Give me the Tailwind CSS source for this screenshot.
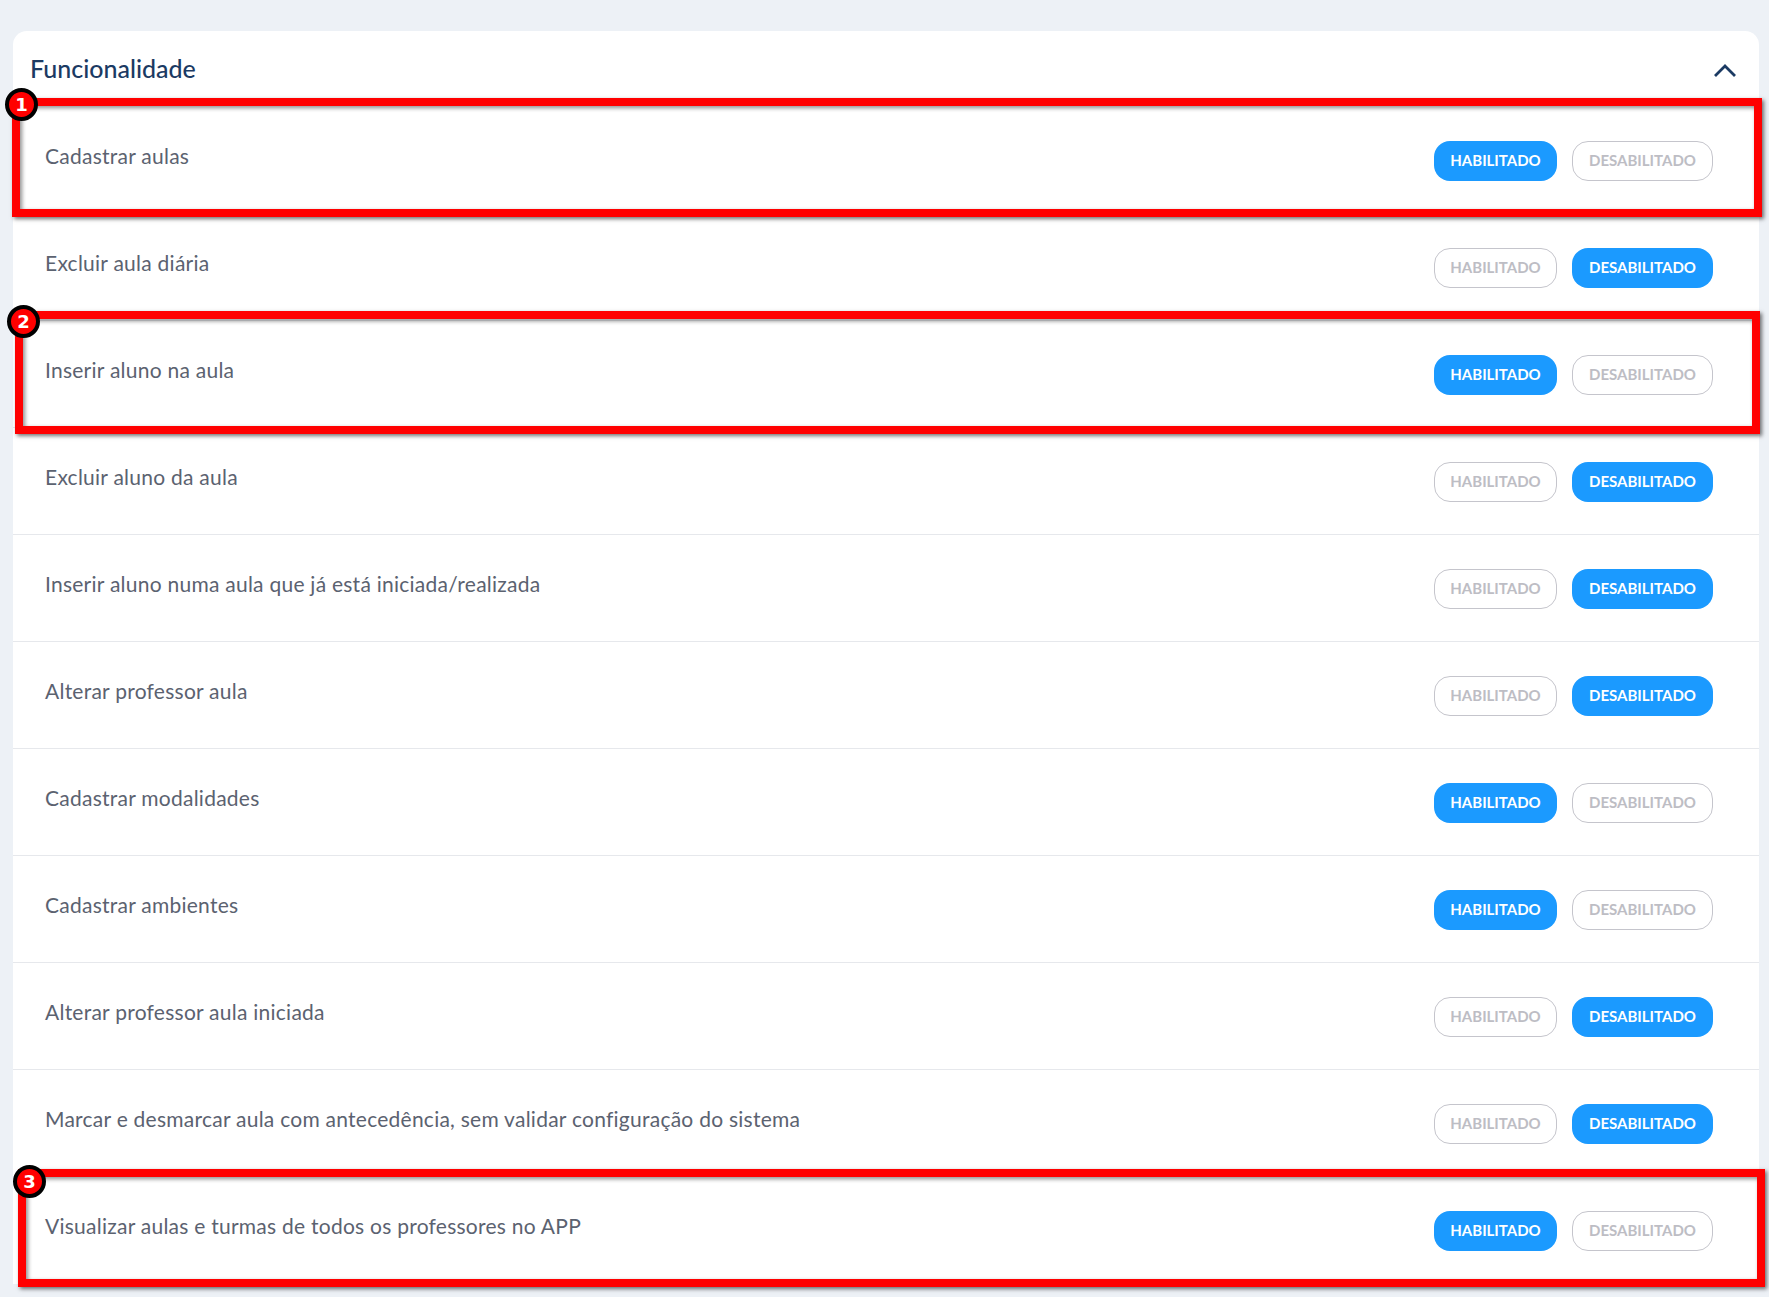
<!DOCTYPE html>
<html lang="pt-BR">
<head>
<meta charset="utf-8">
<title>Funcionalidade</title>
<script src="https://cdn.jsdelivr.net/npm/@tailwindcss/browser@4"></script>
</head>
<body class="bg-[#edf1f6] font-['Lato',sans-serif]">
<div class="relative h-[1297px] overflow-hidden pt-[31px] pl-[13px] pr-[10px]">
    <!-- card -->
    <div class="bg-white rounded-t-[14px]">
        <div class="flex items-center justify-between h-[76px] pl-[17px] pr-[22px]">
            <h2 class="text-[25px] leading-[30px] font-medium text-[#1b3a63] mb-[2px]">Funcionalidade</h2>
            <svg class="w-[24px] h-[14px] text-[#1b3a63] mt-[2px]" fill="none" stroke="currentColor" viewBox="0 0 24 14"><path stroke-width="2.8" d="M2 13L12 3l10 10"></path></svg>
        </div>

        <div class="flex justify-between items-start h-[107px] pt-[34px] pl-[32px] pr-[46px] border-b border-[#e6e8ec]">
            <span class="mt-[3px] text-[21px] leading-[24px] tracking-[0.25px] text-[#5b6270]">Cadastrar aulas</span>
            <div class="flex gap-[15px]">
                <button class="h-[40px] w-[123px] pb-[2px] rounded-[16px] bg-[#1b9aff] text-white text-[15px] font-bold">HABILITADO</button>
                <button class="h-[40px] w-[141px] pb-[2px] rounded-[16px] border border-[#c5c5cc] text-[#bdbdc4] text-[15px] font-bold">DESABILITADO</button>
            </div>
        </div>
        <div class="flex justify-between items-start h-[107px] pt-[34px] pl-[32px] pr-[46px] border-b border-[#e6e8ec]">
            <span class="mt-[3px] text-[21px] leading-[24px] tracking-[0.25px] text-[#5b6270]">Excluir aula diária</span>
            <div class="flex gap-[15px]">
                <button class="h-[40px] w-[123px] pb-[2px] rounded-[16px] border border-[#c5c5cc] text-[#bdbdc4] text-[15px] font-bold">HABILITADO</button>
                <button class="h-[40px] w-[141px] pb-[2px] rounded-[16px] bg-[#1b9aff] text-white text-[15px] font-bold">DESABILITADO</button>
            </div>
        </div>
        <div class="flex justify-between items-start h-[107px] pt-[34px] pl-[32px] pr-[46px] border-b border-[#e6e8ec]">
            <span class="mt-[3px] text-[21px] leading-[24px] tracking-[0.25px] text-[#5b6270]">Inserir aluno na aula</span>
            <div class="flex gap-[15px]">
                <button class="h-[40px] w-[123px] pb-[2px] rounded-[16px] bg-[#1b9aff] text-white text-[15px] font-bold">HABILITADO</button>
                <button class="h-[40px] w-[141px] pb-[2px] rounded-[16px] border border-[#c5c5cc] text-[#bdbdc4] text-[15px] font-bold">DESABILITADO</button>
            </div>
        </div>
        <div class="flex justify-between items-start h-[107px] pt-[34px] pl-[32px] pr-[46px] border-b border-[#e6e8ec]">
            <span class="mt-[3px] text-[21px] leading-[24px] tracking-[0.25px] text-[#5b6270]">Excluir aluno da aula</span>
            <div class="flex gap-[15px]">
                <button class="h-[40px] w-[123px] pb-[2px] rounded-[16px] border border-[#c5c5cc] text-[#bdbdc4] text-[15px] font-bold">HABILITADO</button>
                <button class="h-[40px] w-[141px] pb-[2px] rounded-[16px] bg-[#1b9aff] text-white text-[15px] font-bold">DESABILITADO</button>
            </div>
        </div>
        <div class="flex justify-between items-start h-[107px] pt-[34px] pl-[32px] pr-[46px] border-b border-[#e6e8ec]">
            <span class="mt-[3px] text-[21px] leading-[24px] tracking-[0.25px] text-[#5b6270]">Inserir aluno numa aula que já está iniciada/realizada</span>
            <div class="flex gap-[15px]">
                <button class="h-[40px] w-[123px] pb-[2px] rounded-[16px] border border-[#c5c5cc] text-[#bdbdc4] text-[15px] font-bold">HABILITADO</button>
                <button class="h-[40px] w-[141px] pb-[2px] rounded-[16px] bg-[#1b9aff] text-white text-[15px] font-bold">DESABILITADO</button>
            </div>
        </div>
        <div class="flex justify-between items-start h-[107px] pt-[34px] pl-[32px] pr-[46px] border-b border-[#e6e8ec]">
            <span class="mt-[3px] text-[21px] leading-[24px] tracking-[0.25px] text-[#5b6270]">Alterar professor aula</span>
            <div class="flex gap-[15px]">
                <button class="h-[40px] w-[123px] pb-[2px] rounded-[16px] border border-[#c5c5cc] text-[#bdbdc4] text-[15px] font-bold">HABILITADO</button>
                <button class="h-[40px] w-[141px] pb-[2px] rounded-[16px] bg-[#1b9aff] text-white text-[15px] font-bold">DESABILITADO</button>
            </div>
        </div>
        <div class="flex justify-between items-start h-[107px] pt-[34px] pl-[32px] pr-[46px] border-b border-[#e6e8ec]">
            <span class="mt-[3px] text-[21px] leading-[24px] tracking-[0.25px] text-[#5b6270]">Cadastrar modalidades</span>
            <div class="flex gap-[15px]">
                <button class="h-[40px] w-[123px] pb-[2px] rounded-[16px] bg-[#1b9aff] text-white text-[15px] font-bold">HABILITADO</button>
                <button class="h-[40px] w-[141px] pb-[2px] rounded-[16px] border border-[#c5c5cc] text-[#bdbdc4] text-[15px] font-bold">DESABILITADO</button>
            </div>
        </div>
        <div class="flex justify-between items-start h-[107px] pt-[34px] pl-[32px] pr-[46px] border-b border-[#e6e8ec]">
            <span class="mt-[3px] text-[21px] leading-[24px] tracking-[0.25px] text-[#5b6270]">Cadastrar ambientes</span>
            <div class="flex gap-[15px]">
                <button class="h-[40px] w-[123px] pb-[2px] rounded-[16px] bg-[#1b9aff] text-white text-[15px] font-bold">HABILITADO</button>
                <button class="h-[40px] w-[141px] pb-[2px] rounded-[16px] border border-[#c5c5cc] text-[#bdbdc4] text-[15px] font-bold">DESABILITADO</button>
            </div>
        </div>
        <div class="flex justify-between items-start h-[107px] pt-[34px] pl-[32px] pr-[46px] border-b border-[#e6e8ec]">
            <span class="mt-[3px] text-[21px] leading-[24px] tracking-[0.25px] text-[#5b6270]">Alterar professor aula iniciada</span>
            <div class="flex gap-[15px]">
                <button class="h-[40px] w-[123px] pb-[2px] rounded-[16px] border border-[#c5c5cc] text-[#bdbdc4] text-[15px] font-bold">HABILITADO</button>
                <button class="h-[40px] w-[141px] pb-[2px] rounded-[16px] bg-[#1b9aff] text-white text-[15px] font-bold">DESABILITADO</button>
            </div>
        </div>
        <div class="flex justify-between items-start h-[107px] pt-[34px] pl-[32px] pr-[46px] border-b border-[#e6e8ec]">
            <span class="mt-[3px] text-[21px] leading-[24px] tracking-[0.25px] text-[#5b6270]">Marcar e desmarcar aula com antecedência, sem validar configuração do sistema</span>
            <div class="flex gap-[15px]">
                <button class="h-[40px] w-[123px] pb-[2px] rounded-[16px] border border-[#c5c5cc] text-[#bdbdc4] text-[15px] font-bold">HABILITADO</button>
                <button class="h-[40px] w-[141px] pb-[2px] rounded-[16px] bg-[#1b9aff] text-white text-[15px] font-bold">DESABILITADO</button>
            </div>
        </div>
        <div class="flex justify-between items-start h-[107px] pt-[34px] pl-[32px] pr-[46px]">
            <span class="mt-[3px] text-[21px] leading-[24px] tracking-[0.25px] text-[#5b6270]">Visualizar aulas e turmas de todos os professores no APP</span>
            <div class="flex gap-[15px]">
                <button class="h-[40px] w-[123px] pb-[2px] rounded-[16px] bg-[#1b9aff] text-white text-[15px] font-bold">HABILITADO</button>
                <button class="h-[40px] w-[141px] pb-[2px] rounded-[16px] border border-[#c5c5cc] text-[#bdbdc4] text-[15px] font-bold">DESABILITADO</button>
            </div>
        </div>
    </div>

    <!-- marcacoes vermelhas por cima do print -->
    <div class="absolute left-[12px] top-[98px] w-[1750px] h-[119px] border-[8px] border-[#ff0000] shadow-[2px_2px_4px_rgba(0,0,0,0.55),inset_2px_2px_4px_rgba(0,0,0,0.45)]"></div>
    <div class="absolute left-[15px] top-[311px] w-[1745px] h-[123px] border-[8px] border-[#ff0000] shadow-[2px_2px_4px_rgba(0,0,0,0.55),inset_2px_2px_4px_rgba(0,0,0,0.45)]"></div>
    <div class="absolute left-[18px] top-[1169px] w-[1747px] h-[118px] border-[8px] border-[#ff0000] shadow-[2px_2px_4px_rgba(0,0,0,0.55),inset_2px_2px_4px_rgba(0,0,0,0.45)]"></div>

    <div class="absolute left-[5px] top-[88px] w-[33px] h-[33px] rounded-full bg-[#ff0000] border-[4px] border-black flex items-center justify-center text-white text-[18px] font-bold font-['DejaVu_Sans',sans-serif]">1</div>
    <div class="absolute left-[7px] top-[305px] w-[33px] h-[33px] rounded-full bg-[#ff0000] border-[4px] border-black flex items-center justify-center text-white text-[18px] font-bold font-['DejaVu_Sans',sans-serif]">2</div>
    <div class="absolute left-[13px] top-[1165px] w-[33px] h-[33px] rounded-full bg-[#ff0000] border-[4px] border-black flex items-center justify-center text-white text-[18px] font-bold font-['DejaVu_Sans',sans-serif]">3</div>
</div>
</body>
</html>
